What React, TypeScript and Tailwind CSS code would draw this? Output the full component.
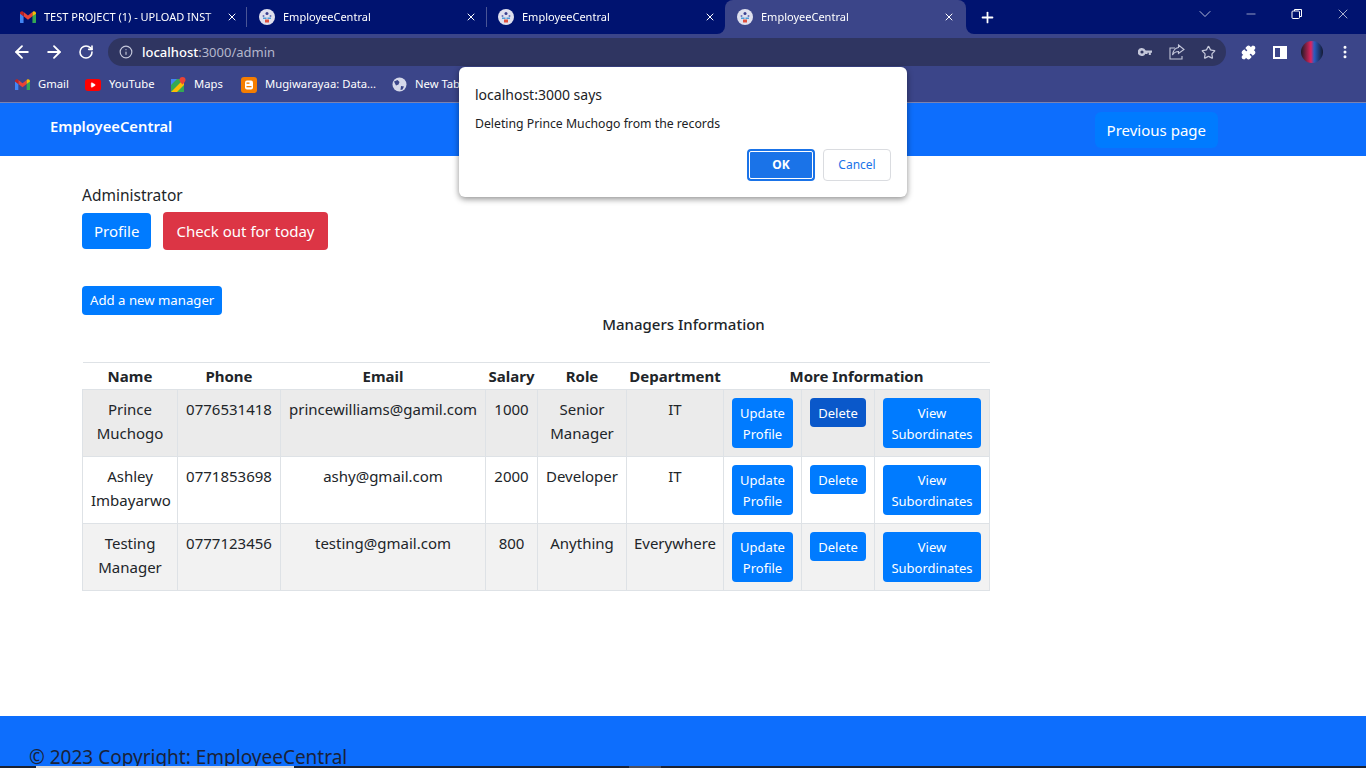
import React from 'react';
import { ArrowLeft, ArrowRight, RotateCw, Info, Star, Puzzle, MoreVertical, Plus, X, ChevronDown, Minus, Play } from 'lucide-react';

const UI_FONT = "font-['Noto_Sans','Open_Sans',sans-serif]";

const MANAGERS = [
  { name: ['Prince', 'Muchogo'], phone: '0776531418', email: 'princewilliams@gamil.com', salary: '1000', role: ['Senior', 'Manager'], department: 'IT', bg: 'bg-[#ebebeb]' },
  { name: ['Ashley', 'Imbayarwo'], phone: '0771853698', email: 'ashy@gmail.com', salary: '2000', role: ['Developer'], department: 'IT', bg: 'bg-white' },
  { name: ['Testing', 'Manager'], phone: '0777123456', email: 'testing@gmail.com', salary: '800', role: ['Anything'], department: 'Everywhere', bg: 'bg-[#f2f2f2]' },
];

const GmailIcon = ({ size = 14 }: { size?: number }) => (
  <svg width={size} height={size * 0.78} viewBox="0 0 18 14" className="shrink-0">
    <path d="M0 2v10.5A1.5 1.5 0 0 0 1.5 14H4V6z" fill="#4285f4" />
    <path d="M14 6v8h2.5a1.5 1.5 0 0 0 1.5-1.5V2z" fill="#34a853" />
    <path d="M4 6 9 9.8 14 6V1.2L9 5 4 1.2z" fill="#ea4335" />
    <path d="M0 2.5C0 .8 2 -.5 3.4.7L4 1.2V6L0 3z" fill="#c5221f" />
    <path d="M14 1.2 14.6.7C16 -.5 18 .8 18 2.5V3l-4 3z" fill="#fbbc04" />
  </svg>
);

const Favicon = () => (
  <span className="flex h-4 w-4 shrink-0 items-center justify-center rounded-full bg-[#dfe0ee]">
    <svg width="12" height="12" viewBox="0 0 12 12">
      <circle cx="6" cy="2.5" r="1.5" fill="#3b3f8f" />
      <circle cx="2.5" cy="5" r="1" fill="#6a6fb5" />
      <circle cx="9.5" cy="5" r="1" fill="#6a6fb5" />
      <rect x="2" y="6.5" width="3.5" height="1.5" fill="#4f9bd8" />
      <rect x="6.5" y="6.5" width="3.5" height="1.5" fill="#4f9bd8" />
      <rect x="4" y="8.5" width="4" height="3" fill="#e0503f" />
    </svg>
  </span>
);

const Tab = ({ title, gmail, active, box }: { title: string; gmail?: boolean; active?: boolean; box: string }) => (
  <div className={`relative flex h-[34px] items-center ${box} ${active ? 'rounded-t-lg bg-[#3b4589]' : ''}`}>
    {gmail ? <GmailIcon size={16} /> : <Favicon />}
    <span className="ml-[8px] min-w-0 flex-1 overflow-hidden whitespace-nowrap text-[11px] text-white [mask-image:linear-gradient(90deg,#000_92%,transparent)]">{title}</span>
    <X size={12} strokeWidth={2} className="ml-[6px] shrink-0 text-white" />
    {active && (
      <>
        <div className="absolute bottom-0 left-[-8px] h-2 w-2 bg-[#3b4589]"><div className="h-full w-full rounded-br-lg bg-[#001370]" /></div>
        <div className="absolute bottom-0 right-[-8px] h-2 w-2 bg-[#3b4589]"><div className="h-full w-full rounded-bl-lg bg-[#001370]" /></div>
      </>
    )}
  </div>
);

const Bookmark = ({ icon, label, w }: { icon: React.ReactNode; label: string; w: string }) => (
  <div className={`flex shrink-0 items-center gap-[8px] ${w}`}>
    {icon}
    <span className="whitespace-nowrap text-[11.25px] text-white">{label}</span>
  </div>
);

const BlueButton = ({ children, dark, w }: { children: React.ReactNode; dark?: boolean; w?: string }) => (
  <button className={`rounded-[4px] px-2 pb-[3px] pt-[5px] text-[13px] leading-[21px] text-white ${dark ? 'bg-[#0a58ca]' : 'bg-[#007bff]'} ${w ?? ''}`}>
    {children}
  </button>
);

const Dialog = () => (
  <div className="absolute left-[459px] top-[67px] h-[130px] w-[448px] rounded-[6px] bg-white shadow-[0_2px_6px_rgba(0,0,0,0.45)]">
    <div className="px-4 pt-[18px]">
      <p className="text-[14px] leading-[20px] text-[#202124]">localhost:3000 says</p>
      <p className="mt-[10px] text-[12.25px] leading-[18px] text-[#202124]">Deleting Prince Muchogo from the records</p>
      <div className="mt-[16px] flex justify-end gap-2">
        <button className="h-[32px] w-[68px] rounded-[4px] border-2 border-[#1a73e8] bg-[#1a73e8] text-[12px] font-bold text-white outline-1 outline-offset-[-3px] outline-white">OK</button>
        <button className="h-[32px] w-[68px] rounded-[4px] border border-[#dadce0] bg-white text-[12px] text-[#1a73e8]">Cancel</button>
      </div>
    </div>
  </div>
);

export default function App() {
  return (
    <div className={`relative flex h-[768px] w-full flex-col overflow-hidden bg-white ${UI_FONT}`}>
      {/* tab strip */}
      <div className="flex h-[34px] shrink-0 items-center bg-[#001370] pl-[8px]">
        <Tab title="TEST PROJECT (1) - UPLOAD INST" gmail box="w-[238px] pl-[12px] pr-[8px]" />
        <div className="h-[20px] w-px bg-[#4a5596]" />
        <Tab title="EmployeeCentral" box="w-[239px] pl-[12px] pr-[9px]" />
        <div className="h-[20px] w-px bg-[#4a5596]" />
        <Tab title="EmployeeCentral" box="w-[238px] pl-[11px] pr-[9px]" />
        <Tab title="EmployeeCentral" active box="w-[241px] pl-[12px] pr-[11px]" />
        <Plus size={17} strokeWidth={2.5} className="ml-[13px] text-white" />
        <div className="ml-auto flex items-center pb-[6px] text-white">
          <ChevronDown size={20} strokeWidth={1} className="mr-[29px] text-[#d5d8ea]" />
          <Minus size={14} strokeWidth={1} className="mr-[33px]" />
          <svg width="12" height="12" viewBox="0 0 12 12" fill="none" stroke="white" className="mr-[32px]">
            <rect x="1" y="3" width="7.5" height="7.5" rx="1" />
            <path d="M3.5 3V1.5h7v7H8.5" />
          </svg>
          <X size={16} strokeWidth={1} className="mr-[15px]" />
        </div>
      </div>

      {/* address bar */}
      <div className="flex h-[36px] shrink-0 items-center bg-[#3b4589] pl-[12px]">
        <ArrowLeft size={20} strokeWidth={2.2} className="text-white" />
        <ArrowRight size={20} strokeWidth={2.2} className="ml-[12px] text-white" />
        <RotateCw size={16} strokeWidth={2.4} className="ml-[14px] text-white" />
        <div className="ml-[14px] flex h-[28px] w-[1118px] items-center rounded-full bg-[#2f3561] pl-[11px]">
          <Info size={14} className="text-[#c4c7da]" />
          <span className="ml-[9px] pt-px text-[13px] font-medium text-white">localhost<span className="font-normal text-[#b4b7cd]">:3000/admin</span></span>
          <div className="ml-auto flex items-center text-[#c4c7da]">
            <svg width="14" height="8" viewBox="0 0 14 8" className="mr-[17px]">
              <path fillRule="evenodd" fill="#c4c7da" d="M4 0a4 4 0 0 1 3.7 2.5H14v2.2h-1.2V7h-2V4.7H9.5V6h-2V5.4A4 4 0 1 1 4 0zm0 2.4a1.6 1.6 0 1 0 0 3.2 1.6 1.6 0 0 0 0-3.2z" />
            </svg>
            <svg width="16" height="16" viewBox="0 0 16 16" fill="none" stroke="#c4c7da" strokeWidth="1.1" className="mr-[16px]">
              <path d="M6 4H1v11h12v-3" />
              <path d="M9.5 1 15 5.5 9.5 9.5V7.5C7 7.5 5 8.5 3.5 11 4 7 6 4 9.5 3.5z" />
            </svg>
            <Star size={15} strokeWidth={2} className="mr-[10px]" />
          </div>
        </div>
        <Puzzle size={15} fill="white" className="ml-[15px] text-white" />
        <div className="ml-[17px] flex h-[13px] w-[14px] justify-end border-2 border-white"><div className="h-full w-[5px] bg-white" /></div>
        <div className="ml-[14px] h-[22px] w-[22px] rounded-full bg-[linear-gradient(90deg,#1b1b25_0%,#e0245e_45%,#2b5cc0_60%,#141a33_100%)]" />
        <MoreVertical size={16} strokeWidth={2.5} className="ml-[14px] text-white" />
      </div>

      {/* bookmarks */}
      <div className="flex h-[33px] shrink-0 items-center border-b border-[#7b82b0] bg-[#3b4589] pb-[3px] pl-[15px]">
        <Bookmark w="w-[70px]" icon={<GmailIcon size={15} />} label="Gmail" />
        <Bookmark
          w="w-[86px]"
          icon={<span className="flex h-[12px] w-[16px] shrink-0 items-center justify-center rounded-[3px] bg-[#ff0000]"><Play size={6} fill="white" className="text-white" /></span>}
          label="YouTube"
        />
        <Bookmark
          w="w-[70px]"
          icon={
            <svg width="15" height="15" viewBox="0 0 15 15" className="shrink-0">
              <rect y="2" width="13" height="13" fill="#34a853" />
              <path d="M0 15 13 2v6l-7 7z" fill="#fbbc04" />
              <path d="M0 2h6L0 8z" fill="#4285f4" />
              <path d="M11.5 0a3 3 0 0 1 3 3c0 2-3 4.5-3 4.5S8.500 5 8.500 3a3 3 0 0 1 3-3z" fill="#ea4335" />
            </svg>
          }
          label="Maps"
        />
        <Bookmark
          w="w-[151px]"
          icon={
            <svg width="16" height="16" viewBox="0 0 16 16" className="shrink-0">
              <rect width="16" height="16" rx="3" fill="#f57d00" />
              <rect x="4" y="3.500" width="8" height="9" rx="2" fill="white" />
              <rect x="5.500" y="5.500" width="3" height="1.300" fill="#f57d00" />
              <rect x="5.500" y="9" width="5" height="1.300" fill="#f57d00" />
            </svg>
          }
          label="Mugiwarayaa: Data..."
        />
        <Bookmark
          w="w-[60px]"
          icon={
            <svg width="15" height="15" viewBox="0 0 15 15" className="shrink-0">
              <circle cx="7.500" cy="7.500" r="7" fill="#d5d8ea" />
              <path d="M2 4.500 5.500 3l2 2-1 2.500-2.500 1-1-2zM9 9l3 .5-1.500 3-2 .5z" fill="#3b4589" />
            </svg>
          }
          label="New Tab"
        />
      </div>

      {/* navbar */}
      <nav className="flex h-[53px] shrink-0 bg-[#0d6efd] pl-[50px] pr-[148px]">
        <span className="mt-[12px] text-[14.75px] font-semibold leading-[22px] text-white">EmployeeCentral</span>
        <button className="ml-auto mt-[9px] h-[36px] rounded-[6px] bg-[#007bff] px-3 text-[15px] text-white">Previous page</button>
      </nav>

      {/* page */}
      <main className="flex-1 pl-[82px]">
        <p className="mt-[28px] text-[15.5px] leading-[22px] text-[#212529]">Administrator</p>
        <div className="mt-[6px] flex items-center gap-3">
          <button className="h-[36px] rounded-[4px] bg-[#007bff] px-3 text-[15px] text-white">Profile</button>
          <button className="h-[38px] rounded-[4px] bg-[#dc3545] px-[13px] text-[15px] text-white">Check out for today</button>
        </div>
        <button className="mt-[36px] block h-[29px] rounded-[4px] bg-[#007bff] px-2 text-[13.2px] text-white">Add a new manager</button>
        <h2 className="w-[1203px] text-center text-[15px] font-medium leading-[18px] text-[#212529]">Managers Information</h2>

        <table className="mt-[29px] w-[907px] table-fixed border-collapse text-center text-[15px] leading-[24px] text-[#212529]">
          <colgroup>
            <col className="w-[95px]" />
            <col className="w-[103px]" />
            <col className="w-[205px]" />
            <col className="w-[52px]" />
            <col className="w-[89px]" />
            <col className="w-[97px]" />
            <col className="w-[78px]" />
            <col className="w-[73px]" />
            <col className="w-[115px]" />
          </colgroup>
          <thead>
            <tr className="h-[27px] border-t border-[#dee2e6] font-bold">
              {['Name', 'Phone', 'Email', 'Salary', 'Role', 'Department'].map(label => (
                <th key={label} className="p-0 text-[15px] font-bold">{label}</th>
              ))}
              <th colSpan={3} className="p-0 text-[15px] font-bold">More Information</th>
            </tr>
          </thead>
          <tbody>
            {MANAGERS.map((manager, index) => (
              <tr key={manager.phone} className={`h-[67px] ${manager.bg}`}>
                <td className="border border-[#dee2e6] px-2 pt-[7px] align-top">
                  {manager.name.map(part => <div key={part}>{part}</div>)}
                </td>
                <td className="border border-[#dee2e6] pt-[7px] align-top">{manager.phone}</td>
                <td className="border border-[#dee2e6] pt-[7px] align-top">{manager.email}</td>
                <td className="border border-[#dee2e6] pt-[7px] align-top">{manager.salary}</td>
                <td className="border border-[#dee2e6] pt-[7px] align-top">
                  {manager.role.map(part => <div key={part}>{part}</div>)}
                </td>
                <td className="border border-[#dee2e6] pt-[7px] align-top">{manager.department}</td>
                <td className="border border-[#dee2e6] pt-[8px] align-top">
                  <BlueButton w="w-[61px]">Update Profile</BlueButton>
                </td>
                <td className="border border-[#dee2e6] pt-[8px] align-top">
                  <BlueButton dark={index === 0} w="w-[56px]">Delete</BlueButton>
                </td>
                <td className="border border-[#dee2e6] pt-[8px] align-top">
                  <BlueButton w="w-[98px]">View Subordinates</BlueButton>
                </td>
              </tr>
            ))}
          </tbody>
        </table>
      </main>

      {/* footer */}
      <footer className="relative h-[52px] shrink-0 bg-[#0d6efd] pl-[29px] pt-[27px]">
        <span className="text-[19px] leading-[28px] text-[#1a2238]">© 2023 Copyright: EmployeeCentral</span>
        <div className="absolute bottom-0 left-0 right-0 flex h-[2px] bg-[#1b2233]">
          <div className="ml-[36px] h-full w-[258px] bg-[#d9d9d9]" />
          <div className="ml-[335px] h-full w-[32px] bg-[#4a4f60]" />
        </div>
      </footer>

      <Dialog />
    </div>
  );
}
